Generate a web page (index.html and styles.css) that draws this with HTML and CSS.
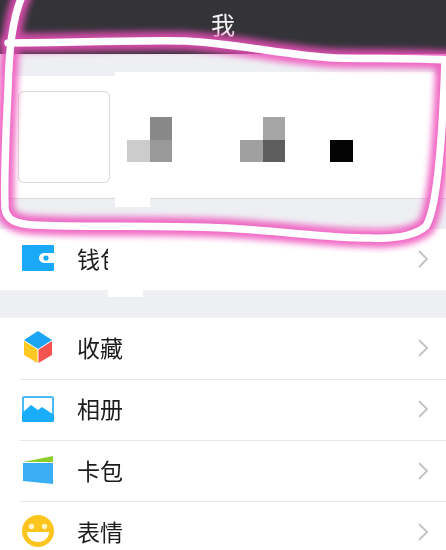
FILE: index.html
```html
<!DOCTYPE html>
<html lang="zh-CN">
<head>
<meta charset="utf-8">
<title>我</title>
<link rel="stylesheet" href="styles.css">
</head>
<body>
<div class="phone">
  <header class="nav">我</header>
  <section class="profile">
    <div class="avatar"></div>
    <div class="mosaic first">
      <i></i><i class="c88"></i><i class="ccc"></i><i class="c99"></i>
    </div>
    <div class="mosaic second">
      <i></i><i class="ca5"></i><i class="ca0"></i><i class="c5e"></i>
    </div>
    <div class="mosaic third">
      <i></i><i></i><i class="c00"></i><i></i>
    </div>
  </section>
  <section class="group wallet">
    <div class="row">
      <svg class="icon" viewBox="0 0 32 32"><path fill="#1aa9f9" d="M1 3h30a1 1 0 0 1 1 1v7H22a5 5 0 0 0 0 10h10v7a1 1 0 0 1-1 1H1a1 1 0 0 1-1-1V4a1 1 0 0 1 1-1z"/><circle cx="24" cy="16" r="2.600" fill="#1aa9f9"/></svg>
      <span class="label">钱包</span>
      <svg class="chev" viewBox="0 0 12 20"><path d="M2 2l8 8-8 8"/></svg>
    </div>
  </section>
  <section class="group list">
    <div class="row line">
      <svg class="icon" viewBox="0 0 32 32"><path fill="#1aa5f5" d="M16 0l14 9-14 9L2 9z"/><path fill="#fcc821" d="M2 10l13.500 8.700V32L2 24z"/><path fill="#f5534f" d="M30 10l-13.500 8.700V32L30 24z"/></svg>
      <span class="label">收藏</span>
      <svg class="chev" viewBox="0 0 12 20"><path d="M2 2l8 8-8 8"/></svg>
    </div>
    <div class="row line">
      <svg class="icon" viewBox="0 0 32 32"><rect x="1" y="5" width="30" height="23" rx="1" fill="#fff" stroke="#4cb8f4" stroke-width="2"/><path fill="#18aefc" d="M0 21l9-8 7 5 4-3 12 8v6a1 1 0 0 1-1 1H1a1 1 0 0 1-1-1z"/></svg>
      <span class="label">相册</span>
      <svg class="chev" viewBox="0 0 12 20"><path d="M2 2l8 8-8 8"/></svg>
    </div>
    <div class="row line">
      <svg class="icon" viewBox="0 0 32 32"><path fill="#8ccf2a" d="M1 8l30-6v6z"/><path fill="#39aef6" d="M1 9l30 0v21L1 27z"/></svg>
      <span class="label">卡包</span>
      <svg class="chev" viewBox="0 0 12 20"><path d="M2 2l8 8-8 8"/></svg>
    </div>
    <div class="row">
      <svg class="icon" viewBox="0 0 32 32"><circle cx="16" cy="16" r="16" fill="#fcc41c"/><circle cx="9.500" cy="11.500" r="2.700" fill="#fff3c4"/><circle cx="22.500" cy="11.500" r="2.700" fill="#fff3c4"/><path fill="#fff" d="M5 17h22c0 6-5 10-11 10S5 23 5 17z"/></svg>
      <span class="label">表情</span>
      <svg class="chev" viewBox="0 0 12 20"><path d="M2 2l8 8-8 8"/></svg>
    </div>
  </section>
  <div class="patch patch-top"></div>
  <div class="patch patch-profile"></div>
  <div class="patch patch-wallet"></div>
  <svg class="scribble" viewBox="0 0 446 550">
    <path class="s-glow" d="M22 -4C12 20 9 50 8 90C6 130 4 180 5 208C6 220 16 224 34 225C90 228 170 224 240 229C290 232 330 238 370 238C395 239 415 236 426 226C436 210 442 150 445 62M8 43C70 43 130 40 186 41C240 44 290 56 335 58C370 59 410 58 450 60"/>
    <path class="s-core" d="M22 -4C12 20 9 50 8 90C6 130 4 180 5 208C6 220 16 224 34 225C90 228 170 224 240 229C290 232 330 238 370 238C395 239 415 236 426 226C436 210 442 150 445 62M8 43C70 43 130 40 186 41C240 44 290 56 335 58C370 59 410 58 450 60"/>
  </svg>
</div>
</body>
</html>
```
FILE: styles.css
```css
* { box-sizing: border-box; }
html, body { margin: 0; padding: 0; background: #fff; }
.phone {
  position: relative;
  width: 446px;
  height: 550px;
  overflow: hidden;
  background: #eeeff3;
  font-family: "Noto Sans CJK SC", "Noto Sans", sans-serif;
  color: #1c1c1c;
}
.nav {
  height: 54px;
  background: #333338;
  color: #f6f6f6;
  font-size: 24px;
  line-height: 48px;
  text-align: center;
}
.nav, .label, .icon { filter: blur(.5px); }
.profile {
  display: flex;
  align-items: flex-start;
  height: 123px;
  margin-top: 22px;
  padding: 15px 0 0 18px;
  background: #fff;
  border-bottom: 1px solid #d9d9dc;
}
.avatar {
  width: 92px;
  height: 92px;
  border: 1px solid #ddd8d0;
  border-radius: 6px;
}
.mosaic {
  display: grid;
  grid-template-columns: 22.500px 22.500px;
  grid-auto-rows: 22.500px;
  margin-top: 26px;
}
.first { margin-left: 17px; }
.second { margin-left: 68px; }
.third { margin-left: 45px; }
.c88 { background: #888; }
.ccc { background: #ccc; }
.c99 { background: #999; }
.ca5 { background: #a5a5a5; }
.ca0 { background: #a0a0a0; }
.c5e { background: #5e5e5e; }
.c00 { background: #040404; }
.group { background: #fff; }
.wallet { margin-top: 30px; }
.list { margin-top: 28px; }
.row {
  position: relative;
  display: flex;
  align-items: center;
  height: 61.300px;
  padding: 0 0 4px 22px;
}
.row.line::after {
  content: "";
  position: absolute;
  left: 20px;
  right: 0;
  bottom: 0;
  height: 1px;
  background: #e6e6e8;
}
.icon { width: 32px; height: 32px; flex: none; }
.label {
  margin-left: 23px;
  font-size: 23px;
  line-height: 32px;
  white-space: nowrap;
}
.chev {
  position: absolute;
  right: 17px;
  top: 50%;
  width: 12px;
  height: 20px;
  margin-top: -11px;
  fill: none;
  stroke: #c4c4c8;
  stroke-width: 2;
  filter: blur(.4px);
}
.patch { position: absolute; background: #fff; }
.patch-top { left: 115px; top: 72px; width: 320px; height: 4px; }
.patch-profile { left: 115px; top: 198px; width: 35px; height: 9px; }
.patch-wallet { left: 108px; top: 240px; width: 35px; height: 57px; }
.scribble {
  position: absolute;
  left: 0;
  top: 0;
  width: 446px;
  height: 550px;
  fill: none;
  stroke-linecap: round;
  stroke-linejoin: round;
}
.s-glow {
  stroke: #ee50bb;
  stroke-width: 19;
  opacity: .85;
  filter: blur(3px);
}
.s-core {
  stroke: #fff;
  stroke-width: 7.500;
  filter: blur(.7px);
}
```
